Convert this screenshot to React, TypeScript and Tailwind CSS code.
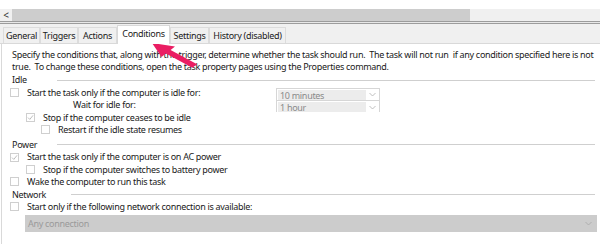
import React from "react";

const font = { fontFamily: '"Segoe UI", "Noto Sans", Arial, sans-serif', letterSpacing: "-0.3px" };

function Check({ checked = false }: { checked?: boolean }) {
  return (
    <div className="w-[9px] h-[9px] border border-[#cfcfcf] bg-white shrink-0 relative">
      {checked && (
        <svg className="absolute left-0 top-0" width="7" height="7" viewBox="0 0 7 7">
          <path d="M1 3.6 L2.8 5.4 L6 1.4" fill="none" stroke="#b5b5b5" strokeWidth="0.9" />
        </svg>
      )}
    </div>
  );
}

function Chevron({ color = "#b0b0b0" }: { color?: string }) {
  return (
    <svg width="7" height="5" viewBox="0 0 7 5">
      <path d="M0.5 1 L3.5 4 L6.5 1" fill="none" stroke={color} strokeWidth="0.8" />
    </svg>
  );
}

function Combo({ value }: { value: string }) {
  return (
    <div className="w-[104px] h-[12px] border-t border-l border-r border-[#d6d6d6] flex items-stretch pt-px pl-px">
      <div className="w-[88px] bg-[#ececec] text-[#8a8a8a] pl-[2px] leading-[11px]">{value}</div>
      <div className="flex-1 flex items-center justify-center">
        <Chevron />
      </div>
    </div>
  );
}

function Header({ label, lineStart }: { label: string; lineStart: string }) {
  return (
    <div className="h-[12.4px] flex items-center pl-[10px] pr-[5px]">
      <div className={lineStart + " shrink-0 text-[#1a1a1a]"}>{label}</div>
      <div className="flex-1 h-px bg-[#cfcfcf]" />
    </div>
  );
}

export default function App() {
  const tabs = [
    { label: "General", w: "w-[37px]" },
    { label: "Triggers", w: "w-[38px]" },
    { label: "Actions", w: "w-[39px]" },
    { label: "Conditions", w: "w-[53px]", active: true },
    { label: "Settings", w: "w-[39px]" },
    { label: "History (disabled)", w: "w-[77px]" },
  ];
  return (
    <div className="w-[600px] h-[244px] overflow-hidden bg-white relative text-[9px] text-[#1a1a1a]" style={font}>
      <div className="h-[9px] bg-white" />
      <div className="h-[12px] flex bg-[#f0f0f0]">
        <div className="w-[12px] flex items-center justify-center text-[#333] text-[10px] leading-none">&lt;</div>
        <div className="w-[458px] bg-[#cdcdcd]" />
        <div className="flex-1" />
      </div>
      <div className="h-[3px] border-t border-b border-[#9c9c9c] bg-[#e8e8e8]" />
      <div className="h-[20px] bg-[#f0f0f0] flex items-end pl-[3px] border-b border-[#d9d9d9] relative">
        {tabs.map((t) =>
          t.active ? (
            <div
              key={t.label}
              className={t.w + " h-[19px] bg-white border-t border-l border-r border-[#d9d9d9] -mb-px flex items-center justify-center pb-[2px] relative z-10 whitespace-nowrap"}
            >
              {t.label}
            </div>
          ) : (
            <div
              key={t.label}
              className={t.w + " h-[16px] bg-[#f0f0f0] border-t border-l border-r border-[#dcdcdc] flex items-center justify-center whitespace-nowrap"}
            >
              {t.label}
            </div>
          )
        )}
      </div>
      <div className="border-l border-[#d9d9d9] ml-px h-[200px]">
        <div className="pl-[10px] pt-[5px] leading-[12px] whitespace-pre">
          <div>{"Specify the conditions that, along with the trigger, determine whether the task should run.  The task will not run  if any condition specified here is not"}</div>
          <div>{"true.  To change these conditions, open the task property pages using the Properties command."}</div>
        </div>
        <div className="h-px" />
        <Header label="Idle" lineStart="w-[45px]" />
        <div className="h-[12.4px] flex items-center pl-[8px]">
          <Check />
          <div className="w-[257px] pl-[8px] shrink-0">Start the task only if the computer is idle for:</div>
          <div className="self-end -mb-[1px]"><Combo value="10 minutes" /></div>
        </div>
        <div className="h-[12.4px] flex items-center">
          <div className="w-[274px] pl-[71px] shrink-0">Wait for idle for:</div>
          <div className="self-end -mb-[1px]"><Combo value="1 hour" /></div>
        </div>
        <div className="h-[12.4px] flex items-center pl-[24px]">
          <Check checked />
          <div className="pl-[8px]">Stop if the computer ceases to be idle</div>
        </div>
        <div className="h-[12.4px] flex items-center pl-[39px]">
          <Check />
          <div className="pl-[8px]">Restart if the idle state resumes</div>
        </div>
        <div className="h-[2.6px]" />
        <Header label="Power" lineStart="w-[45px]" />
        <div className="h-[12.4px] flex items-center pl-[8px]">
          <Check checked />
          <div className="pl-[8px]">Start the task only if the computer is on AC power</div>
        </div>
        <div className="h-[12.4px] flex items-center pl-[24px]">
          <Check />
          <div className="pl-[8px]">Stop if the computer switches to battery power</div>
        </div>
        <div className="h-[12.4px] flex items-center pl-[8px]">
          <Check />
          <div className="pl-[8px]">Wake the computer to run this task</div>
        </div>
        <Header label="Network" lineStart="w-[59px]" />
        <div className="h-[12.4px] flex items-center pl-[8px]">
          <Check />
          <div className="pl-[8px]">Start only if the following network connection is available:</div>
        </div>
        <div className="h-[2px]" />
        <div className="ml-[23px] w-[572px] h-[17px] bg-[#cccccc] flex items-center justify-between pl-[3px] pr-[5px] text-[#9a9a9a]">
          <span>Any connection</span>
          <Chevron color="#a8a8a8" />
        </div>
      </div>
      <svg className="absolute left-0 top-0 pointer-events-none" width="600" height="244" viewBox="0 0 600 244">
        <polygon
          points="152,43 175,46.5 170.6,49.9 197.1,64.2 192.3,67.8 165.9,53.6 161.5,57"
          fill="#ea1e63"
        />
      </svg>
    </div>
  );
}
